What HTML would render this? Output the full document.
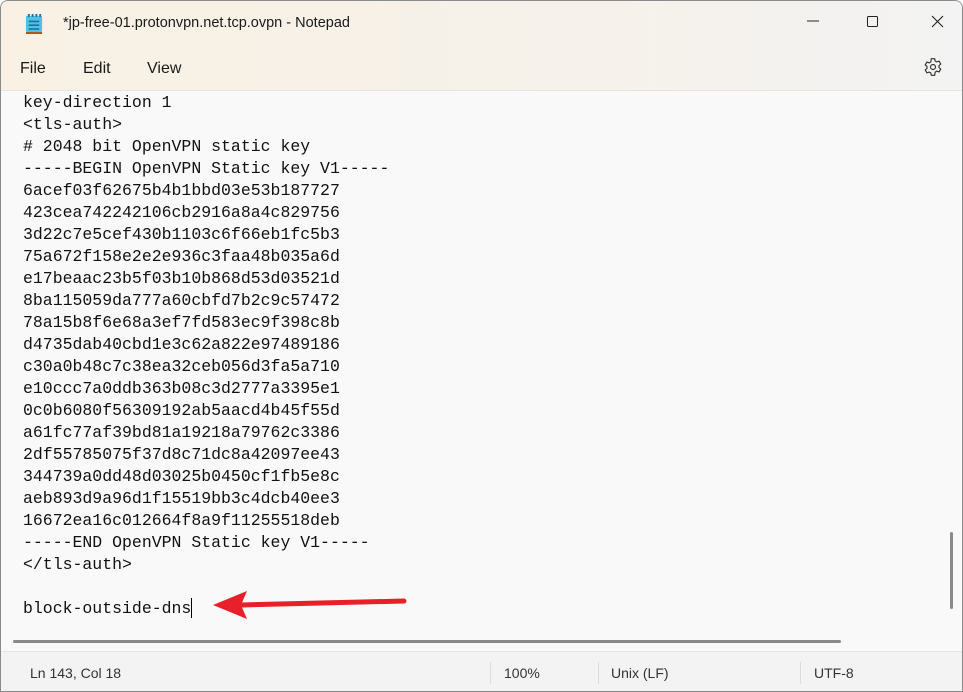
<!DOCTYPE html>
<html><head><meta charset="utf-8"><style>
*{margin:0;padding:0;box-sizing:border-box}
body{width:963px;height:692px;overflow:hidden;background:#fff;font-family:"Liberation Sans",sans-serif;position:relative}
.win{position:absolute;left:0;top:0;width:963px;height:692px;background:#f9f9f9;border:1px solid #8a8a8a;border-radius:8px 8px 0 0;overflow:hidden}
.top{position:absolute;left:0;top:0;width:100%;height:90px;background:linear-gradient(90deg,#f8f1e4,#f6f1ea 60%,#f3f3f3);border-bottom:1px solid #e6e2dc}
.title{position:absolute;left:62px;top:14px;font-size:14.5px;color:#1a1a1a}
.menu{position:absolute;top:59px;font-size:16px;color:#1a1a1a}
.ed{position:absolute;left:22px;top:91px;font-family:"Liberation Mono",monospace;font-size:16.5px;line-height:22px;color:#111;white-space:pre}
.status{position:absolute;left:0;top:650px;width:100%;height:42px;background:#f3f3f3;border-top:1px solid #e5e5e5;font-size:14px;color:#333}
.status span{position:absolute;top:13px}
.div{position:absolute;top:10px;width:1px;height:22px;background:#dcdcdc}
</style></head><body>
<div class="win">
<div class="top">
<svg style="position:absolute;left:24px;top:12px" width="19" height="21" viewBox="0 0 20 22"><rect x="1" y="20" width="17" height="2" fill="#a0521a"/><rect x="1" y="3" width="17" height="17" rx="1.5" fill="#4fc1e9"/><rect x="3" y="1" width="2" height="3" fill="#1f6f9a"/><rect x="7" y="1" width="2" height="3" fill="#1f6f9a"/><rect x="11" y="1" width="2" height="3" fill="#1f6f9a"/><rect x="15" y="1" width="2" height="3" fill="#1f6f9a"/><rect x="4" y="8" width="11" height="1.6" fill="#1a6e99"/><rect x="4" y="12" width="11" height="1.6" fill="#1a6e99"/><rect x="4" y="16" width="11" height="1.6" fill="#1a6e99"/></svg>
<div class="title">*jp-free-01.protonvpn.net.tcp.ovpn - Notepad</div>
<svg style="position:absolute;left:806px;top:14px" width="140" height="14" viewBox="0 0 140 14"><line x1="0" y1="6" x2="12" y2="6" stroke="#222" stroke-width="1"/><rect x="60.5" y="1.5" width="10" height="10" rx="1" fill="none" stroke="#222"/><path d="M125 1L136 12M136 1L125 12" stroke="#222" stroke-width="1.1"/></svg>
<div class="menu" style="left:19px">File</div>
<div class="menu" style="left:82px">Edit</div>
<div class="menu" style="left:146px">View</div>
<svg style="position:absolute;left:922px;top:56px" width="20" height="20" viewBox="0 0 24 24"><path fill="none" stroke="#333" stroke-width="1.4" d="M10 2h4l.6 2.8 2 1.1 2.7-.9 2 3.4-2.1 1.9v2.3l2.1 1.9-2 3.4-2.7-.9-2 1.1L14 22h-4l-.6-2.8-2-1.1-2.7.9-2-3.4 2.1-1.900V11.4L2.7 9.5l2-3.4 2.7.9 2-1.1z"/><circle cx="12" cy="12" r="3" fill="none" stroke="#333" stroke-width="1.4"/></svg>
</div>
<div class="ed">key-direction 1
&lt;tls-auth&gt;
# 2048 bit OpenVPN static key
-----BEGIN OpenVPN Static key V1-----
6acef03f62675b4b1bbd03e53b187727
423cea742242106cb2916a8a4c829756
3d22c7e5cef430b1103c6f66eb1fc5b3
75a672f158e2e2e936c3faa48b035a6d
e17beaac23b5f03b10b868d53d03521d
8ba115059da777a60cbfd7b2c9c57472
78a15b8f6e68a3ef7fd583ec9f398c8b
d4735dab40cbd1e3c62a822e97489186
c30a0b48c7c38ea32ceb056d3fa5a710
e10ccc7a0ddb363b08c3d2777a3395e1
0c0b6080f56309192ab5aacd4b45f55d
a61fc77af39bd81a19218a79762c3386
2df55785075f37d8c71dc8a42097ee43
344739a0dd48d03025b0450cf1fb5e8c
aeb893d9a96d1f15519bb3c4dcb40ee3
16672ea16c012664f8a9f11255518deb
-----END OpenVPN Static key V1-----
&lt;/tls-auth&gt;

block-outside-dns<span style="display:inline-block;width:1px;height:20px;background:#000;vertical-align:-5px"></span></div>
<svg style="position:absolute;left:210px;top:588px" width="200" height="32" viewBox="0 0 200 32"><path d="M193 12L30 16" stroke="#e8202a" stroke-width="5" stroke-linecap="round"/><path d="M2 16L36 2L30 16L36 30Z" fill="#e8202a"/></svg>
<div style="position:absolute;left:12px;top:639px;width:828px;height:3px;background:#8a8a8a;border-radius:2px"></div>
<div style="position:absolute;left:949px;top:531px;width:3px;height:77px;background:#8a8a8a;border-radius:2px"></div>
<div class="status">
<span style="left:29px">Ln 143, Col 18</span>
<div class="div" style="left:489px"></div>
<span style="left:503px">100%</span>
<div class="div" style="left:597px"></div>
<span style="left:610px">Unix (LF)</span>
<div class="div" style="left:799px"></div>
<span style="left:813px">UTF-8</span>
</div>
</div>
</body></html>
